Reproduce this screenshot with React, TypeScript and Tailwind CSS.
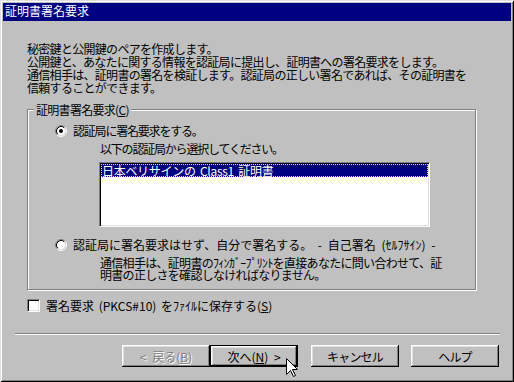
import * as React from 'react';

const raised =
  'shadow-[inset_-1px_-1px_0_#000,inset_1px_1px_0_#fff,inset_-2px_-2px_0_#808080,inset_2px_2px_0_#dfdfdf]';

function Radio({ checked }: { checked?: boolean }) {
  return (
    <svg width="12" height="12" viewBox="0 0 12 12" className="shrink-0">
      <circle cx="6" cy="6" r="4.2" fill="#fff" />
      <path d="M2.11 9.89A5.5 5.5 0 0 1 9.89 2.11" fill="none" stroke="#808080" />
      <path d="M9.89 2.11A5.5 5.5 0 0 1 2.11 9.89" fill="none" stroke="#fff" />
      <path d="M2.82 9.18A4.5 4.5 0 0 1 9.18 2.82" fill="none" stroke="#000" />
      <path d="M9.18 2.82A4.5 4.5 0 0 1 2.82 9.18" fill="none" stroke="#dfdfdf" />
      {checked && <circle cx="6" cy="6" r="2" fill="#000" />}
    </svg>
  );
}

function Btn({ children, def, disabled, tight }: { children: React.ReactNode; def?: boolean; disabled?: boolean; tight?: boolean }) {
  const face = (
    <div
      className={`flex h-full w-full items-center justify-center ${raised} ${
        disabled ? 'text-[#808080] [text-shadow:1px_1px_0_#fff]' : 'text-black'
      } ${tight ? 'tracking-[-0.8px]' : 'tracking-normal [word-spacing:3px]'}`}
    >
      {children}
    </div>
  );
  if (def) {
    return <div className="h-[22px] w-[88px] border border-black">{face}</div>;
  }
  return <div className="h-[22px] w-[88px]">{face}</div>;
}

export default function App() {
  return (
    <div
      className="relative flex h-[382px] w-[514px] flex-col bg-[#c0c0c0] p-[3px] text-[12px] leading-[13px] text-black shadow-[inset_1px_1px_0_#dfdfdf,inset_-1px_-1px_0_#000,inset_2px_2px_0_#fff,inset_-2px_-2px_0_#808080]"
      style={{ fontFamily: "'Noto Sans CJK JP', sans-serif" }}
    >
      {/* title bar */}
      <div className="h-[18px] bg-[#000080] pl-[2px] leading-[16px] text-white">証明書署名要求</div>

      <div className="flex flex-1 flex-col px-[24px] tracking-[-0.7px]">
        <p className="mt-[21px]">
          秘密鍵と公開鍵のペアを作成します。
          <br />
          公開鍵と、あなたに関する情報を認証局に提出し、証明書への署名要求をします。
          <br />
          通信相手は、証明書の署名を検証します。認証局の正しい署名であれば、その証明書を
          <br />
          信頼することができます。
        </p>

        <fieldset className="mt-[9px] w-[449px] border border-[#808080] shadow-[1px_1px_0_#fff,inset_1px_1px_0_#fff]">
          <legend className="ml-[6px] bg-[#c0c0c0] px-[2px] leading-[13px]">
            証明書署名要求(<span className="underline">C</span>)
          </legend>
          <div className="flex flex-col pb-[8px] pl-[27px] pt-[8px]">
            <div className="flex items-start gap-[6px]">
              <div className="mt-[1px]">
                <Radio checked />
              </div>
              <span className="tracking-[-1.2px]">認証局に署名要求をする。</span>
            </div>
            <div className="ml-[45px] mt-[5px] tracking-[-1.2px]">以下の認証局から選択してください。</div>
            <div className="ml-[44px] mt-[7px] h-[65px] w-[331px] border border-b-white border-l-[#808080] border-r-white border-t-[#808080] bg-white shadow-[inset_1px_1px_0_#000,inset_-1px_-1px_0_#dfdfdf] p-[1px]">
              <div className="h-[13px] bg-[#000080] pl-[1px] leading-[13px] tracking-[-0.3px] text-white outline-1 outline-offset-[-1px] outline-[#ffff00] outline-dotted [word-spacing:2px]">
                日本ベリサインの Class1 証明書
              </div>
            </div>
            <div className="mt-[11px] flex items-start gap-[6px]">
              <div className="mt-[1px]">
                <Radio />
              </div>
              <span className="tracking-normal [word-spacing:3px]">
                認証局に署名要求はせず、自分で署名する。 - 自己署名 (ｾﾙﾌｻｲﾝ) -
              </span>
            </div>
            <div className="ml-[45px] mt-[6px] leading-[12px]">
              通信相手は、証明書のﾌｨﾝｶﾞｰﾌﾟﾘﾝﾄを直接あなたに問い合わせて、証
              <br />
              明書の正しさを確認しなければなりません。
            </div>
          </div>
        </fieldset>

        <div className="mt-[9px] flex items-start gap-[6px]">
          <div className="h-[13px] w-[13px] shrink-0 border border-b-white border-l-[#808080] border-r-white border-t-[#808080] bg-white shadow-[inset_1px_1px_0_#000,inset_-1px_-1px_0_#dfdfdf]" />
          <span className="tracking-normal [word-spacing:2px]">
            署名要求 (PKCS#10) をﾌｧｲﾙに保存する(<span className="underline">S</span>)
          </span>
        </div>

        <div className="-ml-[12px] -mr-[13px] mt-[21px] h-[2px] border-b border-t border-b-white border-t-[#808080]" />

        <div className="mt-[10px] flex justify-end -mr-[12px]">
          <Btn disabled>&lt; 戻る(<span className="underline">B</span>)</Btn>
          <Btn def>
            次へ(<span className="underline">N</span>) &gt;
          </Btn>
          <div className="ml-[13px]">
            <Btn tight>キャンセル</Btn>
          </div>
          <div className="ml-[12px]">
            <Btn tight>ヘルプ</Btn>
          </div>
        </div>
      </div>

      {/* mouse pointer */}
      <svg className="absolute left-[286px] top-[358px]" width="13" height="20" viewBox="0 0 13 20">
        <path
          d="M0.5 0.5L0.5 16.5L4.5 12.5L7.5 18.5L9.5 17.5L6.5 11.5L11.5 11.5Z"
          fill="#fff"
          stroke="#000"
          strokeLinejoin="miter"
        />
      </svg>
    </div>
  );
}
